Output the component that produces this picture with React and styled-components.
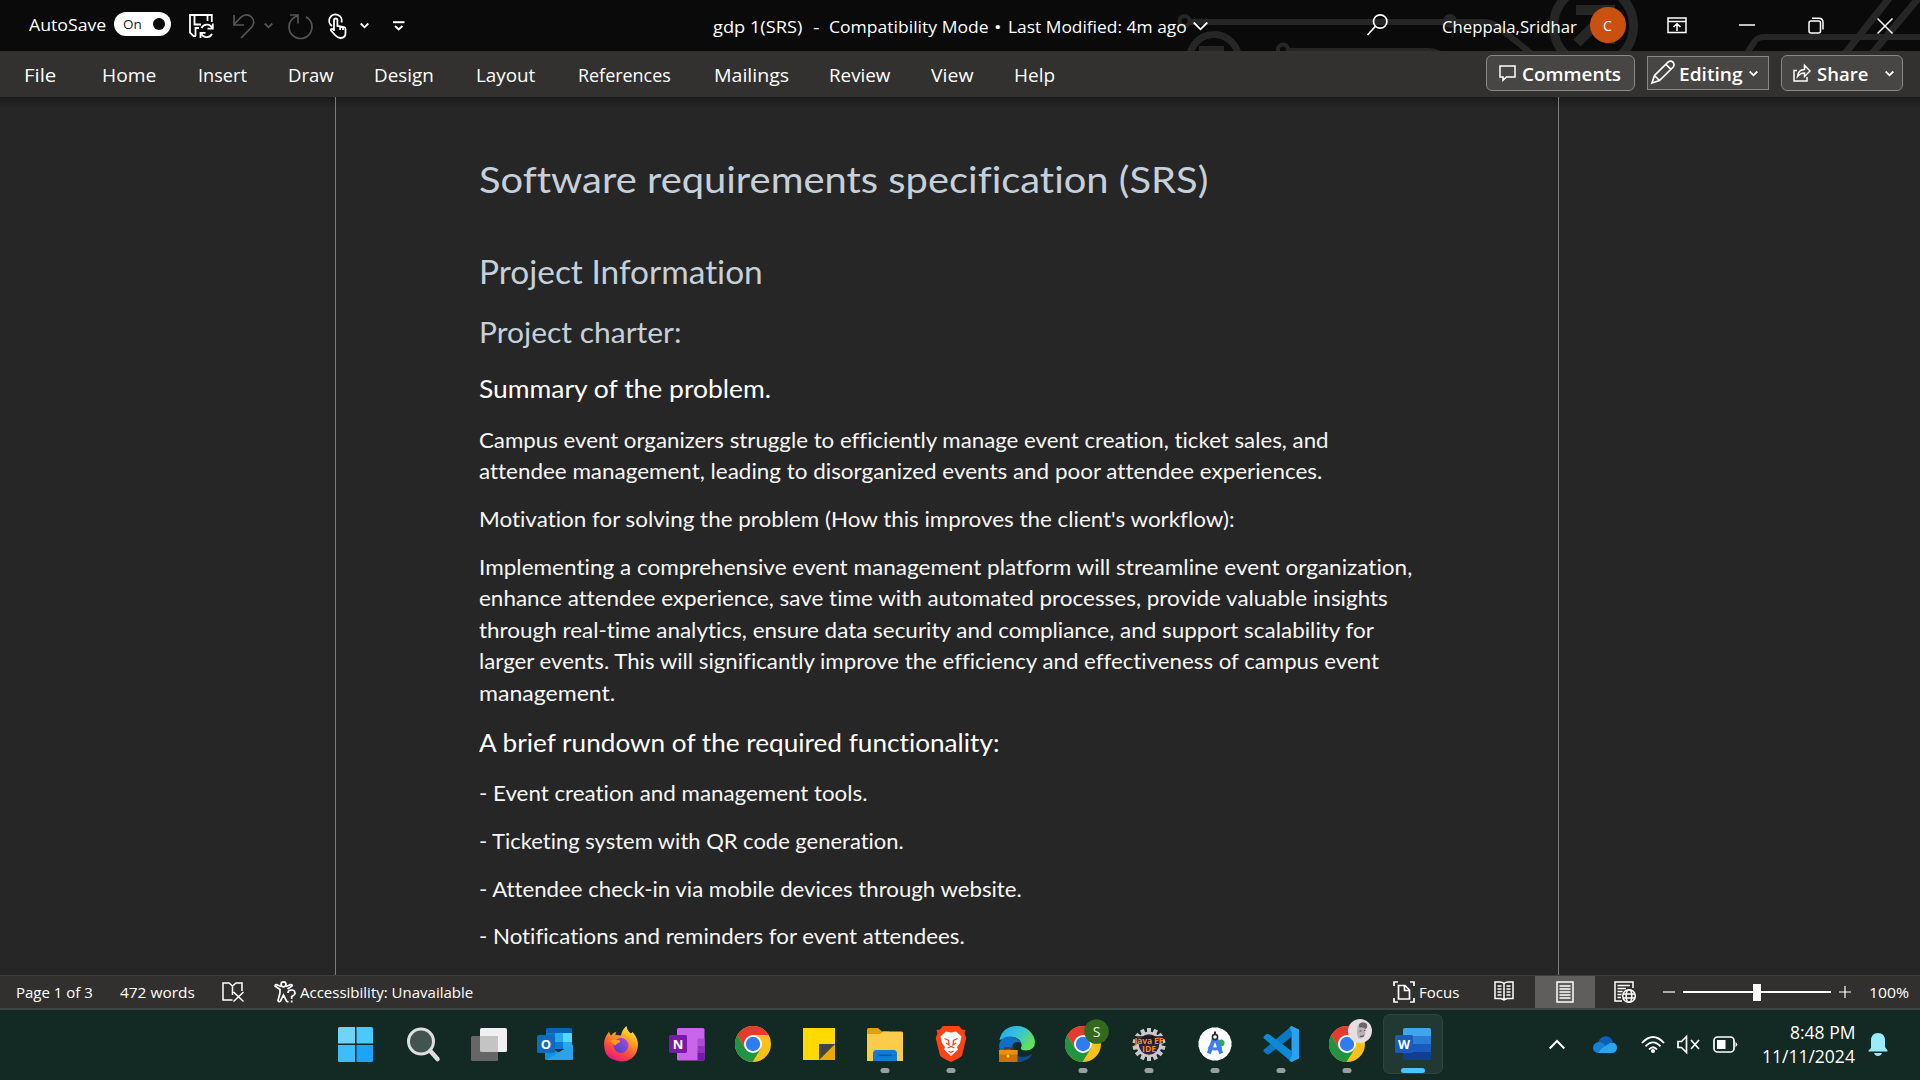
import React, { useLayoutEffect, useRef, useState } from "react";
import styled, { createGlobalStyle } from "styled-components";

const GlobalStyle = createGlobalStyle`
  * { box-sizing: border-box; }
  body { margin: 0; background: #262626; overflow: hidden; }
`;

const UI_FONT = '"Open Sans", "Noto Sans", sans-serif';
const DOC_FONT = 'Lato, "Open Sans", sans-serif';

const Screen = styled.div`
  width: 1920px;
  height: 1080px;
  display: flex;
  flex-direction: column;
  font-family: ${UI_FONT};
  color: #fff;
  background: #262626;
`;

const Label = styled.span`
  display: block;
  flex: none;
  white-space: pre;
  width: ${(p) => p.$w}px;
  margin-left: ${(p) => p.$ml || 0}px;
  margin-top: ${(p) => p.$mt || 0}px;
  font-size: ${(p) => p.$size || 17}px;
  font-weight: ${(p) => p.$weight || 400};
  line-height: 24px;
  color: ${(p) => p.$color || "#fff"};
`;

const DocLine = styled.span`
  display: block;
  white-space: pre;
  width: ${(p) => p.$w}px;
`;

const Measure = styled.span`
  display: inline-block;
  vertical-align: top;
  transform-origin: 0 50%;
`;

/* Condenses or widens the text so that it fills the given measure. */
function Fit({ as: Box = Label, w, children, ...rest }) {
  const ref = useRef(null);
  const [scale, setScale] = useState(1);
  useLayoutEffect(() => {
    setScale(w / ref.current.offsetWidth);
  }, [w, children]);
  return (
    <Box $w={w} {...rest}>
      <Measure ref={ref} style={{ transform: `scaleX(${scale})` }}>{children}</Measure>
    </Box>
  );
}

const Glyph = styled.svg`
  display: block;
  flex: none;
  overflow: visible;
  margin-left: ${(p) => p.$ml || 0}px;
  margin-top: ${(p) => p.$mt || 0}px;
  fill: none;
  stroke: ${(p) => p.$color || "#fff"};
  stroke-width: ${(p) => p.$sw || 1.5};
`;

const Icon = ({ w, h, ml, mt, color, sw, children }) => (
  <Glyph width={w} height={h} viewBox={`0 0 ${w} ${h}`} $ml={ml} $mt={mt} $color={color} $sw={sw}>
    {children}
  </Glyph>
);

const Chevron = ({ w = 9, h = 5, ...p }) => (
  <Icon w={w} h={h} sw={1.8} {...p}>
    <path d={`M.7 .5L${w / 2} ${h - 0.7}L${w - 0.7} .5`} />
  </Icon>
);

/* ---------- title bar ---------- */

const TitleBar = styled.header`
  position: relative;
  height: 51px;
  flex: none;
  display: flex;
  align-items: center;
  padding-left: 29px;
  background: #0a0a0a;
  overflow: hidden;
  isolation: isolate;
`;

const Circuit = styled.svg`
  position: absolute;
  right: 0;
  top: 0;
  z-index: -1;
`;

const Toggle = styled.div`
  flex: none;
  width: 57px;
  height: 24px;
  margin: -3px 0 0 8px;
  border-radius: 12px;
  background: #fff;
  display: flex;
  align-items: center;
`;

const Knob = styled.i`
  width: 12px;
  height: 12px;
  margin-left: 11px;
  border-radius: 50%;
  background: #0a0a0a;
`;

const Avatar = styled.div`
  flex: none;
  width: 36px;
  height: 36px;
  margin: -1px 0 0 13px;
  border-radius: 50%;
  background: #ca5010;
  display: flex;
  align-items: center;
  justify-content: center;
  font-size: 14px;
`;

function CircuitArt() {
  return (
    <Circuit width="760" height="51" viewBox="1160 0 760 51" fill="none" stroke="#262626">
      <circle cx="1184.500" cy="21" r="5" strokeWidth="4" />
      <path d="M1189 22H1484Q1494 22 1502 30L1532 54" strokeWidth="6" />
      <circle cx="1450" cy="21" r="5" strokeWidth="4" fill="#262626" />
      <circle cx="1214" cy="59" r="24.500" strokeWidth="7" />
      <path d="M1199 46h25v6h-25z" fill="#262626" stroke="none" />
      <circle cx="1283" cy="49.500" r="5" strokeWidth="4" />
      <path d="M1290 51H1428Q1436 51 1444 56" strokeWidth="6" />
      <circle cx="1593.500" cy="26" r="40" strokeWidth="9" />
      <path d="M1576 10H1610V44M1610 10L1577 43" strokeWidth="10" />
      <path d="M1745 56L1755 41Q1758 37 1764 37H1920" strokeWidth="6" />
      <path d="M1843 56L1891 -4M1870 56L1921 -5" strokeWidth="7" />
    </Circuit>
  );
}

function Title() {
  return (
    <TitleBar>
      <CircuitArt />
      <Fit w={77} $mt={-2}>AutoSave</Fit>
      <Toggle>
        <Fit w={19} $ml={9} $size={13.5} $color="#222">On</Fit>
        <Knob />
      </Toggle>
      <Icon w={26} h={26} ml={18} mt={3} sw={1.8}>
        <path d="M7 22.200H4.500L1 18.700V1H22.800V8M5.500 1V10.500H12M18.500 1V7M6.500 22V14H10" />
        <path d="M23.500 14.500A6 6 0 0 0 12.500 14M12 18.800A6 6 0 0 0 23 20M23.800 9.500V14.700H18.500M11.500 24V18.800H16.500" />
      </Icon>
      <Icon w={24} h={26} ml={17} mt={3} color="#555" sw={1.7}>
        <path d="M2 1V11H12M2 10.500L9 3.200C12 .300 16.500 .200 19.500 3C22.600 6.200 22.300 10.500 19.500 13.300L9 24" />
      </Icon>
      <Chevron w={9} ml={8} color="#555" />
      <Icon w={26} h={26} ml={15} mt={3} color="#555" sw={1.7}>
        <path d="M2 1H10V9.500M10 1.800C4.500 3.500 1 7.500 1 13A11.500 11.500 0 0 0 24 13C24 8.500 21.500 5 18 2.800" />
      </Icon>
      <Icon w={20} h={26} ml={14} mt={3} sw={1.8}>
        <path d="M4 12A6.300 6.300 0 1 1 13.500 8.500" />
        <path d="M6 17V6.300Q6 4.500 7.700 4.500T9.400 6.300V12L16 13.200Q17.500 13.600 17.500 15V19Q17.500 24 12.500 24Q9.500 24 7.500 21.500L3 16.500Q2.500 14.800 4 14.800L6 16M12.200 12.800V16M15 13.200V16" />
      </Icon>
      <Chevron ml={12} />
      <Icon w={12} h={10} ml={24} sw={2}>
        <path d="M0 1.200H11.500" /><path d="M2 5L5.700 8.500L9.500 5" />
      </Icon>
      <Fit w={89} $ml={308} $mt={3}>gdp 1(SRS)</Fit>
      <Fit w={6} $ml={11} $mt={3}>-</Fit>
      <Fit w={160} $ml={9.5} $mt={3}>Compatibility Mode</Fit>
      <Fit w={7} $ml={5.500} $mt={3}>•</Fit>
      <Fit w={179} $ml={6.5} $mt={3}>Last Modified: 4m ago</Fit>
      <Chevron w={15} h={8} ml={6.5} />
      <Icon w={21} h={22} ml={158.5} mt={-1} sw={1.700}>
        <circle cx="13.200" cy="7.500" r="6.700" /><path d="M8.200 12.500L.500 21" />
      </Icon>
      <Fit w={135} $ml={54} $mt={3}>Cheppala,Sridhar</Fit>
      <Avatar>C</Avatar>
      <Icon w={20} h={17} ml={41} sw={1.500}>
        <path d="M1 1H19V15.500H1ZM1 4.500H19M10 14V7M6.500 10L10 6.700L13.500 10" />
      </Icon>
      <Icon w={16} h={2} ml={52} mt={-2}><path d="M0 1H16" /></Icon>
      <Icon w={16} h={17} ml={53} sw={1.500}>
        <rect x="1" y="4" width="11.500" height="12" rx="2" />
        <path d="M4 1.200H11Q15 1.200 15 5.500V12.500" />
      </Icon>
      <Icon w={16} h={16} ml={53}><path d="M.5 .5L15.500 15.500M15.500 .5L.5 15.500" /></Icon>
    </TitleBar>
  );
}

/* ---------- ribbon tabs ---------- */

const Ribbon = styled.nav`
  height: 46px;
  flex: none;
  display: flex;
  align-items: center;
  padding-left: 24px;
  background: #32312f;
`;

const RibbonButton = styled.div`
  flex: none;
  display: flex;
  align-items: center;
  width: ${(p) => p.$w}px;
  height: ${(p) => p.$h || 36}px;
  margin-left: ${(p) => p.$ml}px;
  margin-top: -2px;
  padding-left: ${(p) => p.$pl}px;
  border: 1px solid #8a8886;
  border-radius: ${(p) => (p.$square ? 0 : 6)}px;
  background: #484644;
`;

const TABS = [
  ["File", 32, 0],
  ["Home", 54, 46],
  ["Insert", 49, 42],
  ["Draw", 46, 41],
  ["Design", 60, 40],
  ["Layout", 59, 42],
  ["References", 93, 43],
  ["Mailings", 75, 43],
  ["Review", 61, 40],
  ["View", 42, 41],
  ["Help", 41, 41],
];

function RibbonTabs() {
  return (
    <Ribbon>
      {TABS.map(([name, w, ml]) => (
        <Fit key={name} w={w} $ml={ml} $size={18.5} $mt={1}>{name}</Fit>
      ))}
      <RibbonButton $w={149} $ml={431} $pl={12}>
        <Icon w={17} h={16} sw={1.500} mt={-1}>
          <path d="M1 1H16V12H7.500L4 15.300V12H1Z" />
        </Icon>
        <Fit w={99} $ml={6} $size={18.500} $weight={600} $mt={1}>Comments</Fit>
      </RibbonButton>
      <RibbonButton $w={122} $h={34} $ml={12} $pl={3} $square>
        <Icon w={25} h={24} sw={1.700} mt={-3}>
          <path d="M1 23L3.500 15.500L17 2.200Q19.500 .200 22 2.200Q24 4.500 22.200 7L8.500 20.500ZM3.500 15.500L8.500 20.500M15 4.500L20 9.300" />
        </Icon>
        <Fit w={63} $ml={3} $size={18.500} $weight={600} $mt={2}>Editing</Fit>
        <Chevron ml={6.500} />
      </RibbonButton>
      <RibbonButton $w={122} $ml={12} $pl={11}>
        <Icon w={18} h={18} sw={1.500}>
          <path d="M4 6.500H1V17H14V13M4.500 12.500C5 8 7.500 5.500 11.500 5.500V1.300L17 7L11.500 12.500V9C8.500 8.800 6.500 10 4.500 12.500Z" />
        </Icon>
        <Fit w={51} $ml={6} $size={18.500} $weight={600} $mt={1}>Share</Fit>
        <Chevron ml={17} />
      </RibbonButton>
    </Ribbon>
  );
}

/* ---------- document ---------- */

const Canvas = styled.main`
  height: 878px;
  flex: none;
  display: flex;
  justify-content: center;
  padding-right: 27px;
  background: linear-gradient(#1b1b1b, #262626 12px);
  overflow: hidden;
`;

const Page = styled.article`
  width: 1224px;
  border: solid #7c7c7c;
  border-width: 0 1px;
  padding: 60px 0 0 143px;
  font-family: ${DOC_FONT};
  font-variant-ligatures: none;
`;

const DocTitle = styled.h1`
  margin: 0;
  font-size: 37px;
  font-weight: 400;
  line-height: 44px;
  color: #c6d0db;
`;

const Heading = styled.h2`
  margin: 50.6px 0 0;
  font-size: 32.5px;
  font-weight: 400;
  line-height: 40px;
  color: #c6d0db;
`;

const SubHeading = styled.h3`
  margin: 22.4px 0 0;
  font-size: 28.5px;
  font-weight: 400;
  line-height: 36px;
  color: #c6d0db;
`;

const Section = styled.h4`
  margin: ${(p) => p.$mt}px 0 0;
  font-size: 25px;
  font-weight: 400;
  line-height: 30px;
`;

const Para = styled.p`
  margin: ${(p) => p.$mt || 16.3}px 0 0;
  font-size: 21.2px;
  line-height: 31.4px;
  color: #f6f6f6;
`;

const L = ({ w, children }) => <Fit as={DocLine} w={w}>{children}</Fit>;

function Document() {
  return (
    <Canvas>
      <Page>
        <DocTitle><L w={729}>Software requirements specification (SRS)</L></DocTitle>
        <Heading><L w={284}>Project Information</L></Heading>
        <SubHeading><L w={203}>Project charter:</L></SubHeading>
        <Section $mt={23}><L w={292}>Summary of the problem.</L></Section>
        <Para $mt={22.1}>
          <L w={850}>Campus event organizers struggle to efficiently manage event creation, ticket sales, and</L>
          <L w={843}>attendee management, leading to disorganized events and poor attendee experiences.</L>
        </Para>
        <Para><L w={756}>Motivation for solving the problem (How this improves the client's workflow):</L></Para>
        <Para>
          <L w={933}>Implementing a comprehensive event management platform will streamline event organization,</L>
          <L w={909}>enhance attendee experience, save time with automated processes, provide valuable insights</L>
          <L w={895}>through real-time analytics, ensure data security and compliance, and support scalability for</L>
          <L w={900}>larger events. This will significantly improve the efficiency and effectiveness of campus event</L>
          <L w={136}>management.</L>
        </Para>
        <Section $mt={18.2}><L w={520}>A brief rundown of the required functionality:</L></Section>
        <Para $mt={21}><L w={389}>- Event creation and management tools.</L></Para>
        <Para><L w={425}>- Ticketing system with QR code generation.</L></Para>
        <Para><L w={543}>- Attendee check-in via mobile devices through website.</L></Para>
        <Para><L w={486}>- Notifications and reminders for event attendees.</L></Para>
      </Page>
    </Canvas>
  );
}

/* ---------- status bar ---------- */

const Status = styled.footer`
  height: 35px;
  flex: none;
  display: flex;
  align-items: center;
  padding-left: 16px;
  background: #32302f;
  border-top: 1px solid #3d3c3b;
  border-bottom: 2px solid #3b4745;
`;

const ViewButton = styled.div`
  flex: none;
  width: 60px;
  height: 32px;
  margin-left: 21px;
  display: flex;
  align-items: center;
  justify-content: center;
  background: #605e5c;
`;

const Slider = styled.div`
  flex: none;
  width: 148px;
  height: 17px;
  margin-left: 8px;
  display: flex;
  align-items: center;
  background: linear-gradient(#fff, #fff) center / 100% 2px no-repeat;
`;

const Thumb = styled.i`
  width: 8px;
  height: 17px;
  margin-left: 70px;
  background: #fff;
`;

function StatusBar() {
  return (
    <Status>
      <Fit w={77} $size={15}>Page 1 of 3</Fit>
      <Fit w={75} $ml={27} $size={15}>472 words</Fit>
      <Icon w={22} h={20} ml={27} sw={1.500}>
        <path d="M10.500 18H1V1H7L10.500 4V13M10.500 4L14 1H20V9M11.500 10L21.500 19.500M21.500 10L11.500 19.500" />
      </Icon>
      <Icon w={22} h={22} ml={30} sw={1.700}>
        <circle cx="9.500" cy="3.300" r="2.500" />
        <path d="M7 5.500L2.500 3.500Q1 3.500 1 5L6 8.500V12L4 19.500Q5 21.500 6.500 20L9.500 14L12.500 20Q13 21 14.500 20.500M12 5.500L16.500 3.500Q18.500 3.500 18 5L13.500 8" />
        <path d="M14 12Q14 9 17.500 9T21 12Q21 14 17.700 15.500V18M17.700 19.500V21.500" />
      </Icon>
      <Fit w={173} $ml={4} $size={15}>Accessibility: Unavailable</Fit>
      <Icon w={22} h={22} ml={920} sw={1.700}>
        <path d="M1 5V1H5M17 1H21V5M21 17V21H17M5 21H1V17M5.500 4.500H12L16.500 9V18H5.500ZM11.500 4.500V9.500H16.500" />
      </Icon>
      <Fit w={40} $ml={4} $size={15}>Focus</Fit>
      <Icon w={20} h={20} ml={35} mt={-2} sw={1.500}>
        <path d="M10 2.500Q8.500 1 6 1H1V17.500H7L10 19L13 17.500H19V1H14Q11.500 1 10 2.500V18M3.500 5H7.500M3.500 8H7.500M3.500 11H7.500M3.500 14H7.500M12.500 5H16.500M12.500 8H16.500M12.500 11H16.500M12.500 14H16.500" />
      </Icon>
      <ViewButton>
        <Icon w={18} h={22} sw={1.500}>
          <path d="M1 1H17V21H1ZM3.500 5H14.500M3.500 8H14.500M3.500 11H14.500M3.500 14H14.500M3.500 17H14.500" />
        </Icon>
      </ViewButton>
      <Icon w={22} h={22} ml={19} sw={1.500}>
        <path d="M8 20H1V1H19V7M3.500 4.500H16M3.500 7.500H12M3.500 10.500H8.500M3.500 13.500H7.500M3.500 16.500H7" />
        <circle cx="15" cy="15" r="6.300" /><ellipse cx="15" cy="15" rx="2.800" ry="6.300" />
        <path d="M9 13H21M9 17H21" />
      </Icon>
      <Icon w={12} h={2} ml={27} sw={1.200}><path d="M0 1H12" /></Icon>
      <Slider><Thumb /></Slider>
      <Icon w={12} h={12} ml={8} sw={1.200}><path d="M0 6H12M6 0V12" /></Icon>
      <Fit w={40} $ml={18} $size={15}>100%</Fit>
    </Status>
  );
}

/* ---------- taskbar ---------- */

const Taskbar = styled.div`
  height: 70px;
  flex: none;
  display: flex;
  align-items: center;
  padding: 0 0 2px 324px;
  background: #122924;
`;

const Slot = styled.div`
  position: relative;
  flex: none;
  width: 60px;
  height: 60px;
  margin: 0 3px;
  border-radius: 7px;
  ${(p) => p.$active && "background: rgba(255,255,255,.07); box-shadow: inset 0 0 0 1px rgba(255,255,255,.06);"}
`;

const Indicator = styled.i`
  position: absolute;
  left: 50%;
  bottom: 1px;
  transform: translateX(-50%);
  width: ${(p) => (p.$active ? 24 : 9)}px;
  height: 5px;
  border-radius: 2.500px;
  background: ${(p) => (p.$active ? "#4cc2ff" : "#96a09d")};
`;

const AppArt = styled.svg`
  display: block;
  text { font-family: ${UI_FONT}; text-anchor: middle; }
`;

const Chrome = () => (
  <g>
    <circle cx="32" cy="30" r="18" fill="#fbc116" />
    <path d="M16.400 21A18 18 0 0 0 31.500 48L39.800 34.500L32 30L24.200 34.500Z" fill="#229342" />
    <path d="M16.400 21A18 18 0 0 1 47.600 21H32L24 34Z" fill="#e33b2e" />
    <circle cx="32" cy="30" r="9" fill="#fff" />
    <circle cx="32" cy="30" r="7.200" fill="#2e7df0" />
  </g>
);

const gearTeeth = Array.from({ length: 14 }, (_, i) => (i * 360) / 14);

const APPS = [
  { art: (
    <g>
      <path d="M14.500 13H30V29.500H13V14.500Q13 13 14.500 13Z" fill="#6fd3fc" />
      <path d="M31.500 13H46.500Q48 13 48 14.500V29.500H31.500Z" fill="#4cc9fb" />
      <path d="M13 31H30V48H14.500Q13 48 13 46.500Z" fill="#3dbdfb" />
      <path d="M31.500 31H48V46.500Q48 48 46.500 48H31.500Z" fill="#1ba4f8" />
    </g>) },
  { art: (
    <g fill="none" stroke="#dededf" strokeLinecap="round">
      <path d="M38 35.500L46.500 45" strokeWidth="4.500" />
      <circle cx="30" cy="27.500" r="12.500" strokeWidth="3" fill="#41544f" />
    </g>) },
  { art: (
    <g>
      <rect x="23" y="14" width="27" height="24" rx="1.500" fill="#f0f0f0" />
      <rect x="14" y="22" width="27" height="25" rx="1.500" fill="#666" />
      <path d="M23 22H41V38H24.500Q23 38 23 36.500Z" fill="#c4c4c4" />
    </g>) },
  { art: (
    <g>
      <rect x="23" y="14" width="26" height="18" rx="1.500" fill="#0a63b5" />
      <path d="M23 19H32V28H23Z" fill="#0f78d4" /><path d="M32 19H40V28H32Z" fill="#29a8ea" /><path d="M40 19H49V28H40Z" fill="#50d9ff" />
      <path d="M32 28H40V35H32Z" fill="#0f78d4" /><path d="M40 28H49V35H40Z" fill="#28a8ea" />
      <path d="M22 31L50 46H23.500Q22 46 22 44.500Z" fill="#1490df" />
      <path d="M50 30.500V44.500Q50 46 48.500 46H24L36 38Z" fill="#28a3ea" />
      <rect x="14" y="21" width="18" height="18" rx="1.500" fill="#0f6cbd" />
      <text x="23" y="35" fontSize="13" fontWeight="700" fill="#fff">O</text>
    </g>) },
  { art: (
    <g>
      <defs>
        <linearGradient id="ff" x1=".8" y1="0" x2=".3" y2="1"><stop stopColor="#fff44f" /><stop offset=".35" stopColor="#ffa21c" /><stop offset=".7" stopColor="#ff4a3d" /><stop offset="1" stopColor="#e31587" /></linearGradient>
        <linearGradient id="ffc" x1="1" y1="0" x2="0" y2="1"><stop stopColor="#a64cf0" /><stop offset="1" stopColor="#4a3fb8" /></linearGradient>
      </defs>
      <path d="M20 17.500Q20.500 20 22 21.500Q24 18.500 27.500 17.800Q26 20 26.500 21L32 21.500Q33 15.500 37.500 12Q38 17 42 19.500L43.500 18Q49 24 49 31Q48.500 40 42.500 44.500T27 46.500T16 37T15.500 26T20 17.500Z" fill="url(#ff)" />
      <circle cx="32" cy="31.500" r="7.500" fill="url(#ffc)" />
      <path d="M21 27Q24 25 29 26Q32 26.200 31 28Q28 29.500 26 31.500Q25 30 21 27Z" fill="#ff9a1f" />
    </g>) },
  { art: (
    <g>
      <rect x="22" y="14" width="27.500" height="32.500" rx="1.500" fill="#ca64ea" />
      <path d="M42.500 24.500H49.500V32H42.500Z" fill="#ae4bd5" /><path d="M42.500 32H49.500V39H42.500Z" fill="#9332bf" />
      <path d="M42.500 39H49.500V45Q49.500 46.500 48 46.500H42.500Z" fill="#7719aa" />
      <rect x="14" y="21" width="18" height="18" rx="1.500" fill="#7719aa" />
      <text x="23" y="35" fontSize="13" fontWeight="700" fill="#fff">N</text>
    </g>) },
  { art: <Chrome /> },
  { art: (
    <g>
      <path d="M16 14H48V30L32 46H16Z" fill="#ffd900" />
      <path d="M32 46L48 30V46Z" fill="#e8ab05" /><path d="M32 46V30H48Z" fill="#444" />
    </g>) },
  { running: true, art: (
    <g>
      <path d="M15.500 14H25L29 17.500H36V24H14V15.500Q14 14 15.500 14Z" fill="#dfa00a" />
      <path d="M14 20H27L30 17.500H48.500Q50 17.500 50 19V47H14Z" fill="#fdcb4a" />
      <path d="M20 47V39.500Q20 36 23.500 36H40.500Q44 36 44 39.500V47Z" fill="#0f7fd2" />
      <path d="M25.500 41.300H39" stroke="#0757a0" strokeWidth="1.600" />
    </g>) },
  { running: true, art: (
    <g>
      <path d="M24 12H40L43 15.500L46.500 16L45.500 19.500L47.300 24L43 41.500Q41.500 43.500 32 48Q22.500 43.500 21 41.500L16.700 24L18.500 19.500L17.500 16L21 15.500Z" fill="#fb4416" />
      <path d="M27 17.500L32 18.500L37 17.500L42.500 22.500L41 29L38 33L39 35.500L32 42L25 35.500L26 33L23 29L21.500 22.500Z" fill="#fff" />
      <path d="M25.500 24.500L29.500 26.500L30 31L27 29M38.500 24.500L34.500 26.500L34 31L37 29M28.500 34L32 32.500L35.500 34M29.500 37L32 38.500L34.500 37" stroke="#fb4416" strokeWidth="1.300" fill="none" />
    </g>) },
  { art: (
    <g>
      <defs>
        <linearGradient id="edg" x1="0" y1="0" x2="1" y2=".5"><stop stopColor="#22a7e8" /><stop offset=".5" stopColor="#35c1e0" /><stop offset="1" stopColor="#63e05a" /></linearGradient>
      </defs>
      <path d="M32 12A18 18 0 0 1 50 28Q50 36 41 36.500Q35 36.500 36 33.500Q38 30 34.500 26Q28 20 18 25L14.500 26Q17 12.500 32 12Z" fill="url(#edg)" />
      <path d="M14 32Q14.500 23 24 22.500Q33 22.500 36 29Q31 26.500 28 30Q25 36 30 41.500Q36 47 46 41.500Q41 48 32 48Q15 47 14 32Z" fill="#0f6fc5" />
      <path d="M28 31Q25 36 31 41Q38 45.500 47.500 40Q42 48.500 31 48Z" fill="#114a94" />
      <rect x="14" y="36" width="18.500" height="12" fill="#c57409" />
      <path d="M14 36H32.500V40.500H14Z" fill="#e3930d" /><path d="M20 36V34H26.500V36" stroke="#5a3410" strokeWidth="1.500" fill="none" />
      <circle cx="23" cy="42" r="1.500" fill="#ffd83d" />
    </g>) },
  { running: true, art: (
    <g><Chrome /><circle cx="45.500" cy="17.500" r="12.300" fill="#33691e" /><text x="45.500" y="22.500" fontSize="14" fill="#e6efe0">S</text></g>) },
  { running: true, art: (
    <g>
      {gearTeeth.map((a) => (
        <rect key={a} x="30" y="14" width="4" height="6" fill="#c9c9c9" transform={`rotate(${a} 32 30.500)`} />
      ))}
      <circle cx="32" cy="30.500" r="11.500" fill="#2b2440" stroke="#c9c9c9" strokeWidth="2.500" />
      <path d="M18 22H46V30H18Z" fill="#1a1420" opacity=".75" />
      <text x="32" y="29.500" fontSize="8.500" fontWeight="700" fill="#f58a25" textLength="29">Java EE</text>
      <text x="32" y="37.500" fontSize="8.500" fontWeight="700" fill="#f58a25">IDE</text>
    </g>) },
  { running: true, art: (
    <g>
      {[0, 18, 36, 54, 72].map((a) => (
        <rect key={a} x="19.500" y="17.500" width="25" height="25" rx="3" fill="#fff" transform={`rotate(${a} 32 30)`} />
      ))}
      <circle cx="32" cy="30" r="16.500" fill="#fff" />
      <circle cx="38" cy="29" r="3.500" fill="#34a853" />
      <path d="M31 24.500L25.800 39.500M33 24.500L38.200 39.500" stroke="#3f7df0" strokeWidth="4" fill="none" />
      <path d="M25.500 33Q32 37 38.500 33" stroke="#3f7df0" strokeWidth="2.800" fill="none" />
      <circle cx="32" cy="23" r="2.600" fill="#fff" stroke="#263238" strokeWidth="1.600" /><path d="M32 17.500V20.500" stroke="#263238" strokeWidth="2" />
    </g>) },
  { running: true, art: (
    <g>
      <path d="M42.500 12V23L20 40.200Q18.500 41.200 17 39.800L14.700 37.500Q14 36.500 15 35.500Z" fill="#0a78c2" />
      <path d="M42.500 48V37L20 20.200Q18.500 19.200 17 20.500L14.700 22.500Q14 23.500 15 24.500Z" fill="#0d8ad6" />
      <path d="M42.500 12L50 15.500V44.500L42.500 48L40.500 46.500L42.500 42V18L40.500 13.500Z" fill="#27a3f1" />
    </g>) },
  { running: true, art: (
    <g>
      <Chrome />
      <circle cx="45" cy="17" r="12" fill="#e6dfe2" />
      <path d="M43 11Q47 8 51 12L50 21Q47 26 43 24Q41 18 43 11Z" fill="#b9b0b6" />
      <path d="M44 10Q48 6.500 52 10Q53 13 51 15Q47 12 44.500 14Z" fill="#6a636c" />
      <path d="M44.500 17H46.500M49 16.500H50.500M45 22Q47 23 49 21.500" stroke="#5a525c" strokeWidth="1.200" fill="none" />
    </g>) },
  { running: true, active: true, art: (
    <g>
      <path d="M23.500 14H48.500Q50 14 50 15.500V22H22V15.500Q22 14 23.500 14Z" fill="#41a5ee" />
      <path d="M22 22H50V30H22Z" fill="#2b7cd3" /><path d="M22 30H50V38H22Z" fill="#185abd" />
      <path d="M22 38H50V44.500Q50 46 48.500 46H23.500Q22 46 22 44.500Z" fill="#103f91" />
      <rect x="14" y="21" width="18" height="18" rx="1.500" fill="#185abd" />
      <text x="23" y="34.700" fontSize="12.500" fontWeight="700" fill="#fff">W</text>
    </g>) },
];

const Clock = styled.div`
  flex: none;
  width: 92px;
  margin: -1px 0 0 25px;
  display: flex;
  flex-direction: column;
  align-items: flex-end;
`;

function TaskBar() {
  return (
    <Taskbar>
      {APPS.map((app, i) => (
        <Slot key={i} $active={app.active}>
          <AppArt width="60" height="60" viewBox="2 0 60 60">{app.art}</AppArt>
          {app.running && <Indicator $active={app.active} />}
        </Slot>
      ))}
      <Icon w={16} h={9} ml={103} sw={2}><path d="M.7 8.500L8 1L15.300 8.500" /></Icon>
      <Icon w={24} h={17} ml={28} color="none">
        <path d="M5 7Q7 0 13 .300Q18 .500 20 6L12 11Z" fill="#0b5fb8" />
        <path d="M5.500 17Q0 16.500 0 11.500Q.5 6.500 6 6Q9 6 12 9L16 14Z" fill="#1480d8" />
        <path d="M5.500 17L8 13L17 7Q23.500 5.500 24 11.500Q23.500 17 18.500 17Z" fill="#29a5ec" />
      </Icon>
      <Icon w={24} h={17} ml={24} sw={1.800}>
        <path d="M1 7Q12 -5 23 7M4.500 10.300Q12 2.300 19.500 10.300M8 13.500Q12 9 16 13.500" />
        <circle cx="12" cy="15" r="2" fill="#fff" stroke="none" />
      </Icon>
      <Icon w={23} h={19} ml={12} sw={1.700}>
        <path d="M1 6.500H4.500L9.500 1.500V17.500L4.500 12.500H1ZM14 5L22 14M22 5L14 14" />
      </Icon>
      <Icon w={25} h={17} ml={13} sw={1.700}>
        <rect x="1" y="1" width="20" height="15" rx="3.500" />
        <path d="M4 4H12.500V13H4ZM22.500 5.500L24.500 8.500L22.500 11.500Z" fill="#fff" stroke="none" />
      </Icon>
      <Clock>
        <Fit w={65} $size={17.5}>8:48 PM</Fit>
        <Fit w={93} $size={17.5}>11/11/2024</Fit>
      </Clock>
      <Icon w={20} h={24} ml={13} color="none">
        <path d="M3 16V9Q3 1 10 1T17 9V15L19.500 18.500V19.500H.500V18.500ZM6 21H14Q13 24 10 24T6 21Z" fill="#99ebff" />
      </Icon>
    </Taskbar>
  );
}

export default function App() {
  return (
    <>
      <GlobalStyle />
      <Screen>
        <Title />
        <RibbonTabs />
        <Document />
        <StatusBar />
        <TaskBar />
      </Screen>
    </>
  );
}
